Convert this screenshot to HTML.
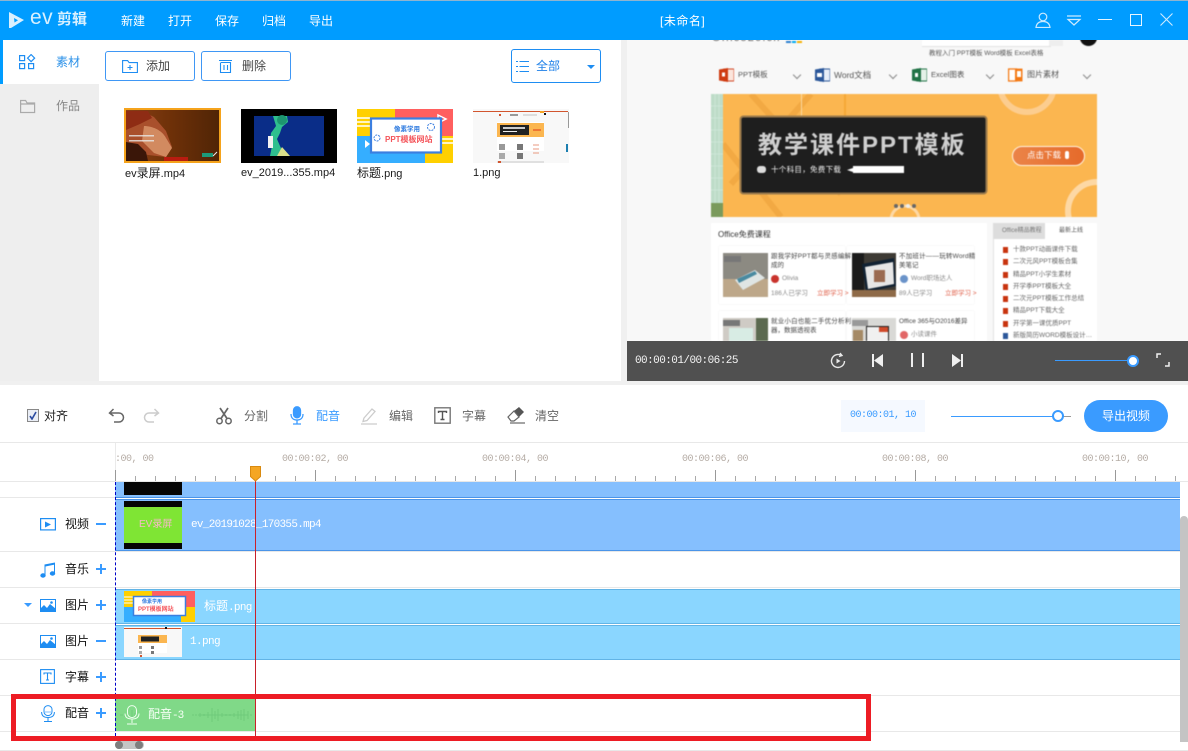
<!DOCTYPE html>
<html lang="zh-CN"><head><meta charset="utf-8"><title>EV剪辑</title>
<style>
html,body{margin:0;padding:0;background:#fff;overflow:hidden}
#app{position:relative;width:1188px;height:751px;overflow:hidden;background:#fff;font-family:"Liberation Sans","Noto Sans CJK SC",sans-serif;font-size:13px;color:#333}
.a{position:absolute}
.t{position:absolute;white-space:nowrap;line-height:18px}
svg{position:absolute;overflow:hidden;display:block}
.mono{font-family:"Liberation Mono","Noto Sans CJK SC",monospace}
.r{font-size:10px;color:#b5aca5;letter-spacing:-.5px;width:80px;text-align:center;top:451px}
.lb{font-size:12px;color:#111;left:65px}
.pm{position:absolute;left:96px;width:10px;height:2px;background:#3a9bff}
.pv{position:absolute;left:100px;width:2px;height:10px;background:#3a9bff}
.line{position:absolute;left:0;height:1px;background:#e8e8e8}
.btn{position:absolute;box-sizing:border-box;border:1px solid #3f97f5;border-radius:3px;background:#fff}
.p{position:absolute;white-space:nowrap;font-size:7.500px;line-height:10px;color:#555}
.dot{position:absolute;width:5px;height:6px;background:#c8340f;left:1003px}
.ch{position:absolute;width:5px;height:5px;border-right:1px solid #888;border-bottom:1px solid #888;transform:rotate(45deg);top:72px}
.th{filter:blur(.35px)}
.fn{font-size:11px;color:#1a1a1a}
.fn span{font-size:12px}
.li{left:1013px;color:#666;font-size:6.500px}
#hd{position:absolute;left:0;top:0;width:1188px;height:40px;z-index:5}
#pv{position:absolute;left:627px;top:40px;width:561px;height:301px;overflow:hidden;background:#f8f8f8}
#pi{position:absolute;left:-627px;top:-40px;width:1188px;height:751px;filter:blur(.4px)}
</style></head><body>
<div id="app">

<!-- header -->
<div id="hd">
<div class="a" style="left:0;top:0;width:1188px;height:1px;background:#8fb4cf"></div>
<div class="a" style="left:0;top:1px;width:1188px;height:39px;background:#009cff"></div>
<svg style="left:8px;top:11px" width="17" height="18" viewBox="0 0 17 18"><path d="M1 1 L16 9 L3 17 L1 17Z" fill="#d8f0ff"/><path d="M6 7 L10 9.200 L6.500 11.500Z" fill="#009cff"/></svg>
<div class="t" style="left:30px;top:6px;font-size:21px;line-height:24px;color:#d8f0ff;letter-spacing:.5px">ev</div>
<div class="t" style="left:57px;top:10px;font-size:15px;line-height:20px;font-weight:700;color:#d8f0ff">剪辑</div>
<div class="t" style="left:121px;top:12px;color:#fff;font-size:12px">新建</div>
<div class="t" style="left:168px;top:12px;color:#fff;font-size:12px">打开</div>
<div class="t" style="left:215px;top:12px;color:#fff;font-size:12px">保存</div>
<div class="t" style="left:262px;top:12px;color:#fff;font-size:12px">归档</div>
<div class="t" style="left:309px;top:12px;color:#fff;font-size:12px">导出</div>
<div class="t" style="left:660px;top:12px;color:#fff;font-size:12px;letter-spacing:.5px">[未命名]</div>
<svg style="left:1034px;top:12px" width="18" height="16" viewBox="0 0 18 16" fill="none" stroke="#cdeaff" stroke-width="1.200"><circle cx="9" cy="5" r="3.800"/><path d="M2 15.500c.5-4 3-6 7-6s6.500 2 7 6z"/></svg>
<svg style="left:1066px;top:15px" width="16" height="11" viewBox="0 0 16 11" fill="none" stroke="#cdeaff" stroke-width="1.200"><path d="M1 1h14M2 4.500h12L8 10z"/></svg>
<div class="a" style="left:1098px;top:19px;width:14px;height:1px;background:#e6f5ff"></div>
<div class="a" style="left:1130px;top:14px;width:10px;height:10px;border:1.500px solid #e6f5ff"></div>
<svg style="left:1160px;top:13px" width="13" height="13" viewBox="0 0 13 13" stroke="#cdeaff" stroke-width="1.100"><path d="M.5.500l12 12M12.500.500l-12 12"/></svg>
</div>

<!-- sidebar -->
<div class="a" style="left:0;top:40px;width:3px;height:44px;background:#009cff"></div>
<div class="a" style="left:0;top:84px;width:99px;height:298px;background:#eeeeee"></div>
<svg style="left:19px;top:54px" width="17" height="16" viewBox="0 0 17 16" fill="none" stroke="#1e8df2" stroke-width="1.200"><rect x=".6" y="1.600" width="5" height="5"/><rect x=".6" y="9.600" width="5" height="5"/><rect x="9.600" y="9.600" width="5" height="5"/><rect x="9.600" y="1.600" width="5" height="5" transform="rotate(45 12.100 4.100)"/></svg>
<div class="t" style="left:56px;top:53px;color:#2a90e8;font-size:12px">素材</div>
<svg style="left:19px;top:99px" width="17" height="15" viewBox="0 0 17 15" fill="none" stroke="#aaa" stroke-width="1.200"><path d="M1.600 13.500V1.500h5l1.500 2.500h7.500v9.500zM1.600 5h14"/></svg>
<div class="t" style="left:56px;top:97px;color:#888;font-size:12px">作品</div>

<!-- buttons -->
<div class="btn" style="left:105px;top:51px;width:90px;height:30px"></div>
<svg style="left:122px;top:60px" width="16" height="13" viewBox="0 0 16 13" fill="none" stroke="#1e8df2" stroke-width="1.100"><path d="M.6 12.500V.6h5l1.500 2h8.300v9.900zM5.500 7.500h5M8 5v5"/></svg>
<div class="t" style="left:146px;top:57px;color:#444;font-size:12px">添加</div>
<div class="btn" style="left:201px;top:51px;width:90px;height:30px"></div>
<svg style="left:219px;top:59px" width="13" height="14" viewBox="0 0 13 14" fill="none" stroke="#1e8df2" stroke-width="1.100"><path d="M0 1.500h13M2 3.500h9.500v10H1.500v-10M5 6v5M8.500 6v5"/></svg>
<div class="t" style="left:242px;top:57px;color:#444;font-size:12px">删除</div>
<div class="btn" style="left:511px;top:49px;width:90px;height:34px;border-color:#1e8df2"></div>
<svg style="left:516px;top:61px" width="13" height="11" viewBox="0 0 13 11" stroke="#1e8df2" stroke-width="1"><path d="M3.500 .5H13M3.500 5.500H13M3.500 10.500H13M0 .5h2M0 5.500h2M0 10.500h2"/></svg>
<div class="t" style="left:536px;top:57px;color:#1e80e8;font-size:12px">全部</div>
<div class="a" style="left:587px;top:65px;border-left:4px solid transparent;border-right:4px solid transparent;border-top:4px solid #1e8df2"></div>

<!-- thumb 1 -->
<svg class="th" style="left:124px;top:108px" width="97" height="55" viewBox="0 0 97 55"><defs><linearGradient id="g1" x1="0" x2="1"><stop offset="0" stop-color="#8a4016"/><stop offset=".5" stop-color="#6d3008"/><stop offset="1" stop-color="#4f2406"/></linearGradient></defs><rect width="97" height="55" fill="url(#g1)"/><path d="M2 3h16l12 6 12 14 6 16-6 10-18-2L2 40z" fill="#a9502c"/><path d="M20 18c8 0 18 4 22 12l6 10-6 9-12-4-12-12z" fill="#d28a60"/><path d="M2 3h22l4 7-12 6-14 6z" fill="#8e2c14"/><path d="M2 34l12 2 8 8 2 9H2z" fill="#3a1608"/><path d="M40 49h24v4H40z" fill="#b81c10"/><rect x="78" y="45" width="11" height="4" fill="#1c9a78"/><path d="M89 48l4-4" stroke="#eee"/><rect x="5" y="27" width="25" height="1.500" fill="#e8e8e8" opacity=".8"/><rect x="5" y="32" width="25" height="1.500" fill="#e8e8e8" opacity=".8"/><rect x="1" y="1" width="95" height="53" fill="none" stroke="#f5a31c" stroke-width="2"/></svg>
<div class="t fn" style="left:125px;top:164px">ev<span>录屏</span>.mp4</div>

<!-- thumb 2 -->
<svg class="th" style="left:241px;top:109px" width="96" height="54" viewBox="0 0 96 54"><rect width="96" height="54" fill="#000"/><rect x="13" y="7" width="70" height="40" fill="#0a2d88"/><path d="M32 7h14l1 6-6 5-2 6-3 6 3 7 5 10H29l2-10-2-4 1-9 5-7z" fill="#2fbf8e"/><circle cx="41" cy="11" r="5" fill="#1d9670"/><rect x="27" y="27" width="5" height="12" fill="#f2f2f2"/><path d="M36 47l5-9 8 9z" fill="#dbe08a"/></svg>
<div class="t fn" style="left:241px;top:164px">ev_2019...355.mp4</div>

<!-- thumb 3 -->
<svg class="th" style="left:357px;top:109px" width="96" height="54" viewBox="0 0 96 54"><rect width="38" height="27" fill="#ffd000"/><rect x="38" width="58" height="27" fill="#ff5f5f"/><rect y="27" width="68" height="27" fill="#35aeff"/><rect x="68" y="27" width="28" height="27" fill="#ffd000"/><path d="M0 9h13M0 13h13M0 17h13" stroke="#fff" stroke-width="1.500"/><path d="M84 30h12M84 34h12" stroke="#fff" stroke-width="1.500"/><path d="M81 6l8 4-8 4z" fill="none" stroke="#fff" stroke-width="1.500"/><path d="M8 31l5 4-5 4z" fill="#fff"/><rect x="14" y="9.500" width="70" height="34" fill="#fff" stroke="#3b7fe0" stroke-width="2.200"/><text x="37" y="22" font-size="6.500" font-weight="700" fill="#2f7be0" font-family="Noto Sans CJK SC">像素学用</text><text x="28" y="33" font-size="8" font-weight="700" fill="#f4545a" font-family="Liberation Sans,Noto Sans CJK SC">PPT模板网站</text><circle cx="74" cy="18" r="3.500" fill="none" stroke="#3b7fe0" stroke-dasharray="2 1"/><circle cx="20" cy="29" r="3" fill="none" stroke="#3b7fe0" stroke-dasharray="2 1"/></svg>
<div class="t fn" style="left:357px;top:164px"><span>标题</span>.png</div>

<!-- thumb 4 -->
<svg class="th" style="left:473px;top:109px" width="96" height="54" viewBox="0 0 96 54"><rect width="96" height="54" fill="#f8f8f8"/><rect y="2" width="95" height="1" fill="#d2552e"/><rect x="67" y="2" width="4" height="2" fill="#f5a623"/><rect x="95" y="3" width="1" height="16" fill="#999"/><rect x="24" y="13" width="47" height="29" fill="#fff"/><rect x="24" y="14" width="47" height="14" fill="#fbb650"/><rect x="27" y="16" width="29" height="10" fill="#222"/><rect x="30" y="18" width="22" height="2" fill="#ccc"/><rect x="30" y="22" width="14" height="1" fill="#eee"/><rect x="60" y="20" width="8" height="2" fill="#ee7733"/><rect x="26" y="35" width="6" height="6" fill="#999"/><rect x="44" y="35" width="6" height="6" fill="#777"/><rect x="26" y="44" width="6" height="6" fill="#aaa"/><rect x="44" y="44" width="6" height="6" fill="#777"/><path d="M60 36h6M60 40h6M60 44h6" stroke="#e89a80"/><rect x="24" y="52" width="47" height="2" fill="#e0e0e0"/><rect x="25" y="52" width="3" height="2" fill="#d2552e"/><rect x="26" y="5" width="2" height="2" fill="#d2552e"/><rect x="37" y="5" width="8" height="2" fill="#999"/><rect x="50" y="5" width="14" height="2" fill="#ddd"/><rect x="71" y="4" width="2" height="2" fill="#111"/><rect x="93" y="35" width="2" height="8" fill="#1c7fb0"/></svg>
<div class="t fn" style="left:473px;top:164px">1.png</div>

<!-- preview -->
<div class="a" style="left:621px;top:40px;width:6px;height:342px;background:#f0f0f0"></div>
<div class="a" style="left:0;top:381px;width:1188px;height:4px;background:#f0f0f0"></div>
<div id="pv"><div id="pi">

<div class="t" style="left:712px;top:32px;font-size:11px;line-height:12px;color:#666;letter-spacing:1.200px">Office26.cn</div>
<div class="a" style="left:786px;top:41px;width:5px;height:2px;background:#2a7fd0"></div>
<div class="a" style="left:792px;top:41px;width:4px;height:2px;background:#00a9f0"></div>
<div class="a" style="left:797px;top:41px;width:5px;height:2px;background:#f5b000"></div>
<div class="a" style="left:922px;top:40px;width:129px;height:6px;background:#fff;border-bottom:1px solid #e2e2e2"></div>
<div class="a" style="left:1049px;top:40px;width:14px;height:6px;background:#eee"></div>
<div class="a" style="left:1080px;top:30px;width:17px;height:16px;border-radius:50%;background:#111"></div>
<div class="p" style="left:929px;top:49px;font-size:6.500px;color:#555">教程入门 PPT模板 Word模板 Excel表格</div>

<!-- preview nav -->
<svg style="left:719px;top:68px" width="15" height="14" viewBox="0 0 15 14"><rect x="5" y="1" width="10" height="12" fill="#fbe5dc" stroke="#d24726"/><path d="M0 1.500L9 0v14l-9-1.500z" fill="#cf3c12"/><rect x="3" y="4.500" width="3" height="4" fill="#fff"/></svg>
<div class="p" style="left:738px;top:70px;font-size:7.500px;color:#555">PPT模板</div>
<div class="ch" style="left:794px"></div>
<svg style="left:815px;top:68px" width="15" height="14" viewBox="0 0 15 14"><rect x="5" y="1" width="10" height="12" fill="#e6edf8" stroke="#2b579a"/><path d="M0 1.500L9 0v14l-9-1.500z" fill="#2b579a"/><rect x="2" y="5" width="5" height="4" fill="#fff"/></svg>
<div class="p" style="left:834px;top:70px;font-size:8.500px;color:#555">Word文档</div>
<div class="ch" style="left:890px"></div>
<svg style="left:912px;top:68px" width="15" height="14" viewBox="0 0 15 14"><rect x="5" y="1" width="10" height="12" fill="#e4f1e8" stroke="#217346"/><path d="M0 1.500L9 0v14l-9-1.500z" fill="#217346"/><rect x="3" y="5" width="3" height="4" fill="#fff"/></svg>
<div class="p" style="left:931px;top:70px;font-size:7.500px;color:#555">Excel图表</div>
<div class="ch" style="left:987px"></div>
<svg style="left:1008px;top:68px" width="15" height="14" viewBox="0 0 15 14"><rect x=".6" y="1" width="8" height="12" fill="#fff" stroke="#f47a16" stroke-width="1.300"/><rect x="7" y=".6" width="7.500" height="12.800" fill="#f47a16"/><rect x="9" y="3" width="4" height="6" fill="#fff"/></svg>
<div class="p" style="left:1027px;top:70px;font-size:8px;color:#555">图片素材</div>
<div class="ch" style="left:1084px"></div>

<!-- banner -->
<svg style="left:711px;top:94px" width="386" height="123" viewBox="0 0 386 123"><rect width="386" height="123" fill="#fbb650"/><path d="M40 0L130 100M100 0L20 90M12 50L70 123" stroke="#f2a943" stroke-width="6" fill="none"/><rect x="90" width="1" height="22" fill="#fbd9a0"/><rect x="0" width="12" height="123" fill="#bddcc8"/><path d="M0 12h12M0 24h12M0 36h12M0 48h12M0 60h12M0 72h12M0 84h12M0 96h12M4 0v109M8 0v109" stroke="#d2e8da" stroke-width=".7"/><rect y="109" width="12" height="14" fill="#7a9a5c"/><rect x="133" width="2" height="22" fill="#f5a836"/><circle cx="316" cy="-9" r="27" fill="none" stroke="#fccd8f" stroke-width="6"/><circle cx="386" cy="117" r="29" fill="none" stroke="#fdd8a4" stroke-width="6"/><circle cx="194" cy="126" r="14" fill="none" stroke="#fdd8a4" stroke-width="3"/><rect x="29.500" y="22.500" width="246" height="77" rx="3" fill="#1e1e1e" stroke="#9a7a4c" stroke-width="2"/><rect x="183" y="110" width="4" height="4" rx="2" fill="#666"/><rect x="189" y="110" width="4" height="4" rx="2" fill="#666"/><rect x="195" y="110" width="4" height="4" rx="2" fill="#eee"/><rect x="201" y="110" width="4" height="4" rx="2" fill="#666"/></svg>
<div class="t" style="left:758px;top:130px;font-size:24px;line-height:32px;font-weight:700;color:#cfcfcf;letter-spacing:2px">教学课件PPT模板</div>
<div class="t" style="left:771px;top:164px;font-size:7.500px;line-height:12px;color:#f2f2f2;letter-spacing:.3px">十个科目，免费下载</div>
<div class="a" style="left:757px;top:166px;width:9px;height:7px;border-radius:3px;background:#ddd"></div>
<div class="a" style="left:853px;top:166px;width:51px;height:7px;background:#fff"></div>
<div class="a" style="left:847px;top:168px;border-top:2px solid transparent;border-bottom:2px solid transparent;border-right:6px solid #fff"></div>
<div class="a" style="left:1012px;top:146px;width:71px;height:18px;border:1px solid #fff2e0;border-radius:10px;background:linear-gradient(90deg,#eb8448,#e66a2a)"></div>
<div class="t" style="left:1027px;top:149px;font-size:8.500px;line-height:13px;color:#fff">点击下载</div>
<div class="a" style="left:1065px;top:151px;width:4px;height:8px;border-radius:2px;background:#fff"></div>

<!-- course panel -->
<div class="a" style="left:711px;top:223px;width:276px;height:118px;background:#fff"></div>
<div class="p" style="left:718px;top:230px;font-size:8px;color:#333">Office免费课程</div>
<div class="a" style="left:719px;top:246px;width:126px;height:58px;background:#fff;box-shadow:0 0 2px #eee"></div>
<div class="a" style="left:847px;top:246px;width:127px;height:58px;background:#fff;box-shadow:0 0 2px #eee"></div>
<svg style="left:723px;top:253px" width="45" height="44" viewBox="0 0 45 44"><rect width="45" height="44" fill="#8c8a82"/><rect y="26" width="45" height="18" fill="#bda789"/><path d="M12 27l20-10 10 8-22 12z" fill="#dfe5e4"/><path d="M14 26l18-8 2 3-18 9z" fill="#4a8aa0"/><rect x="1" y="3" width="17" height="6" fill="#777"/></svg>
<svg style="left:852px;top:253px" width="44" height="44" viewBox="0 0 44 44"><rect width="44" height="44" fill="#3d3a34"/><rect y="0" width="12" height="44" fill="#1b1b1b"/><path d="M10 11l32-6 2 28-30 6z" fill="#123"/><path d="M13 14l28-5 1 22-26 5z" fill="#e6e6e6"/><rect x="22" y="17" width="11" height="12" fill="#9a6a50"/><rect y="37" width="44" height="7" fill="#8e6a48"/></svg>
<div class="p" style="left:771px;top:252px;color:#444;font-size:6.500px;letter-spacing:.2px">跟我学好PPT都与灵感编解</div>
<div class="p" style="left:771px;top:261px;color:#444;font-size:6.500px">成的</div>
<div class="a" style="left:771px;top:275px;width:8px;height:8px;border-radius:50%;background:#c9332c"></div>
<div class="p" style="left:782px;top:274px;color:#888;font-size:6.500px">Olivia</div>
<div class="p" style="left:771px;top:289px;color:#888;font-size:6.500px">186人已学习</div>
<div class="p" style="left:817px;top:289px;color:#e0604a;font-size:6.500px">立即学习 &gt;</div>
<div class="p" style="left:899px;top:252px;color:#444;font-size:6.500px;letter-spacing:.2px">不加班计——玩转Word精</div>
<div class="p" style="left:899px;top:261px;color:#444;font-size:6.500px">美笔记</div>
<div class="a" style="left:900px;top:275px;width:8px;height:8px;border-radius:50%;background:#6a93c9"></div>
<div class="p" style="left:911px;top:274px;color:#888;font-size:6.500px">Word职场达人</div>
<div class="p" style="left:899px;top:289px;color:#888;font-size:6.500px">89人已学习</div>
<div class="p" style="left:945px;top:289px;color:#e0604a;font-size:6.500px">立即学习 &gt;</div>
<div class="a" style="left:719px;top:311px;width:126px;height:30px;background:#fff;box-shadow:0 0 2px #eee"></div>
<div class="a" style="left:847px;top:311px;width:127px;height:30px;background:#fff;box-shadow:0 0 2px #eee"></div>
<svg style="left:723px;top:318px" width="45" height="23" viewBox="0 0 45 23"><rect width="45" height="23" fill="#cfcbc5"/><rect x="6" y="10" width="24" height="13" fill="#d8ece4"/><rect x="33" width="12" height="23" fill="#5c6a50"/><rect x="0" y="2" width="17" height="6" fill="#777"/></svg>
<svg style="left:852px;top:318px" width="44" height="23" viewBox="0 0 44 23"><rect width="44" height="23" fill="#d9d9d6"/><rect x="14" y="8" width="23" height="15" fill="#222"/><rect x="15" y="9" width="21" height="14" fill="#f0f0f0"/><rect x="27" y="9" width="9" height="5" fill="#d04a2a"/><rect x="0" y="2" width="16" height="6" fill="#999"/><rect x="1" y="12" width="10" height="11" fill="#a58a66"/></svg>
<div class="p" style="left:771px;top:317px;color:#444;font-size:6.500px;letter-spacing:.2px">就业小白也能二手优分析利</div>
<div class="p" style="left:771px;top:326px;color:#444;font-size:6.500px">器，数据透视表</div>
<div class="p" style="left:899px;top:317px;color:#444;font-size:6.500px">Office 365与O2016差异</div>
<div class="a" style="left:900px;top:331px;width:8px;height:8px;border-radius:50%;background:#e26666"></div>
<div class="p" style="left:911px;top:330px;color:#888;font-size:6.500px">小读课件</div>

<!-- right list -->
<div class="a" style="left:993px;top:223px;width:104px;height:118px;background:#fff"></div>
<div class="a" style="left:993px;top:223px;width:52px;height:16px;background:#dddddd"></div>
<div class="a" style="left:993px;top:239px;width:1px;height:102px;background:#e2e2e2"></div>
<div class="p" style="left:1002px;top:226px;color:#777;font-size:6px">Office精品教程</div>
<div class="p" style="left:1059px;top:226px;color:#555;font-size:6px">最新上线</div>
<div class="dot" style="top:247px"></div><div class="p li" style="top:245px">十款PPT动画课件下载</div>
<div class="dot" style="top:259px"></div><div class="p li" style="top:257px">二次元风PPT模板合集</div>
<div class="dot" style="top:272px"></div><div class="p li" style="top:270px">精品PPT小学生素材</div>
<div class="dot" style="top:284px"></div><div class="p li" style="top:282px">开学季PPT模板大全</div>
<div class="dot" style="top:296px"></div><div class="p li" style="top:294px">二次元PPT模板工作总结</div>
<div class="dot" style="top:308px"></div><div class="p li" style="top:306px">精品PPT下载大全</div>
<div class="dot" style="top:321px"></div><div class="p li" style="top:319px">开学第一课优质PPT</div>
<div class="dot" style="top:333px;background:#2b579a"></div><div class="p li" style="top:331px">新版简历WORD模板设计…</div>
</div></div>

<!-- player controls -->
<div class="a" style="left:627px;top:341px;width:561px;height:40px;background:#505050"></div>
<div class="t mono" style="left:635px;top:352px;font-size:11px;color:#f4f4f4;letter-spacing:-.55px">00:00:01/00:06:25</div>
<svg style="left:829px;top:352px" width="18" height="18" viewBox="0 0 18 18" fill="none" stroke="#e8e8e8" stroke-width="1.400"><path d="M15.500 9a6.500 6.500 0 1 1-3-5.500M11 1l2 2.500-3 1"/><path d="M7.500 6.500l4 2.500-4 2.500z" fill="#e8e8e8" stroke="none"/></svg>
<svg style="left:871px;top:353px" width="13" height="15" viewBox="0 0 13 15" fill="#f0f0f0"><rect x="1" y="1" width="2" height="13"/><path d="M12 1v13L3 7.500z"/></svg>
<div class="a" style="left:911px;top:353px;width:2px;height:14px;background:#eee"></div>
<div class="a" style="left:922px;top:353px;width:2px;height:14px;background:#eee"></div>
<svg style="left:951px;top:353px" width="13" height="15" viewBox="0 0 13 15" fill="#f0f0f0"><rect x="10" y="1" width="2" height="13"/><path d="M1 1v13l9-6.500z"/></svg>
<div class="a" style="left:1055px;top:360px;width:78px;height:1px;background:#3a9bff"></div>
<div class="a" style="left:1127px;top:355px;width:8px;height:8px;border:2px solid #3a9bff;border-radius:50%;background:#fff"></div>
<svg style="left:1156px;top:353px" width="14" height="14" viewBox="0 0 14 14" fill="none" stroke="#f0f0f0" stroke-width="1.500"><path d="M1 5V1h4M13 9v4H9"/></svg>

<!-- toolbar -->
<div class="a" style="left:27px;top:409px;width:10px;height:11px;border:1px solid #888;background:#e9edf5"></div>
<svg style="left:29px;top:411px" width="9" height="9" viewBox="0 0 9 9" fill="none" stroke="#2a4aa0" stroke-width="1.600"><path d="M1 5l2 3 4-7"/></svg>
<div class="t" style="left:44px;top:407px;font-size:12px;color:#222">对齐</div>
<svg style="left:108px;top:408px" width="17" height="16" viewBox="0 0 17 16" fill="none" stroke="#666" stroke-width="1.500"><path d="M2 5h9a4.500 4.500 0 0 1 0 9H6M5.500 1L1.500 5l4 3"/></svg>
<svg style="left:143px;top:408px" width="17" height="16" viewBox="0 0 17 16" fill="none" stroke="#ccc" stroke-width="1.500"><path d="M15 5H6a4.500 4.500 0 0 0 0 9h5M11.500 1l4 4-4 3"/></svg>
<svg style="left:216px;top:407px" width="16" height="18" viewBox="0 0 16 18" fill="none" stroke="#666" stroke-width="1.500"><circle cx="3.500" cy="14" r="2.700"/><circle cx="12.500" cy="14" r="2.700"/><path d="M5 11.500L12 1M11 11.500L4 1" stroke-width="1.700"/></svg>
<div class="t" style="left:244px;top:407px;font-size:12px;color:#666">分割</div>
<svg style="left:290px;top:406px" width="14" height="19" viewBox="0 0 14 19" fill="none" stroke="#3a9bff" stroke-width="1.300"><rect x="3.500" y=".8" width="7" height="11" rx="3.500" fill="#3a9bff"/><path d="M1 8c0 4 2.500 6 6 6s6-2 6-6M7 14v4M3 18h8"/></svg>
<div class="t" style="left:316px;top:407px;font-size:12px;color:#3a9bff">配音</div>
<svg style="left:361px;top:407px" width="16" height="18" viewBox="0 0 16 18" fill="none" stroke="#ccc" stroke-width="1.300"><path d="M3 11L11 2l3 2.500L6 13.500l-4 1zM0 17h16"/></svg>
<div class="t" style="left:389px;top:407px;font-size:12px;color:#666">编辑</div>
<svg style="left:434px;top:407px" width="17" height="17" viewBox="0 0 17 17" fill="none" stroke="#555" stroke-width="1.400"><rect x=".8" y=".8" width="15.400" height="15.400" stroke="#777"/><path d="M4.500 6V4.500h8V6M8.500 4.500v8M6.500 12.500h4"/></svg>
<div class="t" style="left:462px;top:407px;font-size:12px;color:#666">字幕</div>
<svg style="left:507px;top:407px" width="18" height="17" viewBox="0 0 18 17"><path d="M7 4l5-4 5 5-5 5z" fill="#555"/><path d="M7 4L1 10l3 4h3l5-4z" fill="none" stroke="#666" stroke-width="1.200"/><path d="M3 16h15" stroke="#666" stroke-width="1.200"/></svg>
<div class="t" style="left:535px;top:407px;font-size:12px;color:#666">清空</div>
<div class="a" style="left:841px;top:400px;width:84px;height:32px;background:#f5f9ff"></div>
<div class="t mono" style="left:850px;top:407px;font-size:10px;color:#3a9bff;letter-spacing:-.5px">00:00:01, 10</div>
<div class="a" style="left:951px;top:416px;width:107px;height:1px;background:#3a9bff"></div>
<div class="a" style="left:1058px;top:416px;width:13px;height:1px;background:#999"></div>
<div class="a" style="left:1052px;top:410px;width:8px;height:8px;border:2px solid #3a9bff;border-radius:50%;background:#fff"></div>
<div class="a" style="left:1084px;top:400px;width:84px;height:32px;border-radius:16px;background:#3a9bff"></div>
<div class="t" style="left:1102px;top:407px;font-size:12px;color:#fff">导出视频</div>

<!-- ruler -->
<div class="line" style="top:442px;width:1188px"></div>
<div class="a" style="left:115px;top:443px;width:1px;height:38px;background:#eaeaea"></div>
<div class="a" style="left:115px;top:476px;width:1065px;height:5px;background:repeating-linear-gradient(to right,#aaa 0 1px,transparent 1px 20px)"></div>
<div class="a" style="left:115px;top:470px;width:1065px;height:11px;background:repeating-linear-gradient(to right,#999 0 1px,transparent 1px 200px)"></div>
<div class="t mono r" style="left:115px;width:34px;text-align:left">:00, 00</div>
<div class="t mono r" style="left:275px">00:00:02, 00</div>
<div class="t mono r" style="left:475px">00:00:04, 00</div>
<div class="t mono r" style="left:675px">00:00:06, 00</div>
<div class="t mono r" style="left:875px">00:00:08, 00</div>
<div class="t mono r" style="left:1075px">00:00:10, 00</div>
<div class="line" style="top:481px;width:1188px"></div>

<!-- row lines -->
<div class="line" style="top:497px;width:115px"></div>
<div class="line" style="top:551px;width:1188px"></div>
<div class="line" style="top:587px;width:1188px"></div>
<div class="line" style="top:623px;width:115px"></div>
<div class="line" style="top:659px;width:115px"></div>
<div class="line" style="top:695px;width:1188px"></div>
<div class="line" style="top:731px;width:1188px"></div>
<div class="line" style="top:750px;width:1188px"></div>

<!-- clips -->
<div class="a" style="left:115px;top:482px;width:1065px;height:15px;background:#85bffe"></div>
<div class="a" style="left:115px;top:497px;width:1065px;height:1px;background:#4b94e8"></div>
<div class="a" style="left:124px;top:482px;width:58px;height:13px;background:#050505"></div>
<div class="a" style="left:115px;top:499px;width:1065px;height:52px;background:#85bffe;border-top:1px solid #4b94e8;border-bottom:1px solid #4b94e8;box-sizing:border-box"></div>
<div class="a" style="left:124px;top:501px;width:58px;height:48px;background:#050505"></div>
<div class="a" style="left:124px;top:507px;width:58px;height:36px;background:#7fe534"></div>
<div class="t" style="left:139px;top:516px;font-size:10px;color:#f7b8c8">EV录屏</div>
<div class="t mono" style="left:191px;top:516px;font-size:11px;color:#fff;letter-spacing:-.7px">ev_20191028_170355.mp4</div>

<div class="a" style="left:115px;top:589px;width:1065px;height:35px;background:#8ad6ff;border-top:1px solid #62b4e6;border-bottom:1px solid #62b4e6;box-sizing:border-box"></div>
<svg style="left:124px;top:591px" width="71" height="31" viewBox="0 0 71 31"><rect width="28" height="16" fill="#ffd000"/><rect x="28" width="43" height="16" fill="#ff5f5f"/><rect y="16" width="57" height="15" fill="#35aeff"/><rect x="57" y="16" width="14" height="15" fill="#ffd000"/><path d="M0 6h9M0 9h9M0 12h9" stroke="#fff"/><rect x="9.500" y="5.500" width="52" height="19" fill="#fff" stroke="#3b7fe0" stroke-width="1.500"/><text x="18" y="12" font-size="5" font-weight="700" fill="#2f7be0" font-family="Noto Sans CJK SC">像素学用</text><text x="14" y="20" font-size="6" font-weight="700" fill="#f4545a" font-family="Liberation Sans,Noto Sans CJK SC">PPT模板网站</text></svg>
<div class="t" style="left:204px;top:597px;font-size:12px;color:#fff">标题<span class="mono" style="font-size:11px;letter-spacing:-.7px">.png</span></div>

<div class="a" style="left:115px;top:625px;width:1065px;height:35px;background:#8ad6ff;border-top:1px solid #62b4e6;border-bottom:1px solid #62b4e6;box-sizing:border-box"></div>
<svg style="left:124px;top:627px" width="58" height="30" viewBox="0 0 58 30"><rect width="58" height="30" fill="#f8f8f8"/><rect y="1" width="57" height="1" fill="#d2552e"/><rect x="41" y="0" width="2" height="2" fill="#111"/><rect x="14" y="8" width="29" height="18" fill="#fff"/><rect x="14" y="8" width="29" height="8" fill="#fbb650"/><rect x="17" y="9.500" width="18" height="5" fill="#222"/><rect x="15" y="19" width="3" height="3" fill="#999"/><rect x="27" y="19" width="3" height="3" fill="#777"/><rect x="15" y="24" width="3" height="3" fill="#aaa"/><rect x="27" y="24" width="3" height="3" fill="#777"/><rect x="16" y="28" width="2" height="2" fill="#d2552e"/></svg>
<div class="t mono" style="left:190px;top:633px;font-size:11px;color:#fff;letter-spacing:-.6px">1.png</div>

<div class="a" style="left:115px;top:699px;width:140px;height:32px;background:#80d988"></div>
<svg style="left:118px;top:705px" width="135" height="20" viewBox="0 0 135 20" stroke="#6fcb7a" stroke-width="1"><path d="M2 10h3M7 8v4M10 9v2M14 5v10M17 8v4M21 9v2M75 9v2M78 9v2M82 8v4M86 9v2M90 7v6M94 3v14M97 6v8M100 4v12M104 8v4M108 9v2M112 9v2M116 8v4M120 6v8M123 5v10M126 4v12M130 6v8M133 9v2M80 10h50"/></svg>
<svg style="left:124px;top:705px" width="16" height="20" viewBox="0 0 16 20" fill="none" stroke="#f0fff0" stroke-width="1"><rect x="3.500" y=".6" width="9" height="12" rx="4.500"/><path d="M1 8.500c0 4 3 5.500 7 5.500s7-1.500 7-5.500M8 14v4M3 19h10"/></svg>
<div class="t" style="left:148px;top:705px;font-size:12px;color:#f4fff4">配音<span class="mono" style="font-size:11px;letter-spacing:-1px">-3</span></div>

<!-- row labels -->
<svg style="left:40px;top:518px" width="16" height="13" viewBox="0 0 16 13"><rect x=".6" y=".6" width="14.800" height="11.300" fill="none" stroke="#1e8df2" stroke-width="1.200"/><path d="M5 3.500l6 3-6 3z" fill="#1e8df2"/></svg>
<div class="t lb" style="top:515px">视频</div>
<div class="pm" style="top:523px"></div>
<svg style="left:40px;top:562px" width="16" height="16" viewBox="0 0 16 16" fill="#1e8df2"><path d="M4.500 2.500L15 .5v2L5.500 4.500V13h-1zM14 2h1v9.500h-1z"/><ellipse cx="3" cy="13.500" rx="2.700" ry="2.200"/><ellipse cx="12.500" cy="11.500" rx="2.700" ry="2.200"/></svg>
<div class="t lb" style="top:560px">音乐</div>
<div class="pm" style="top:568px"></div><div class="pv" style="top:564px"></div>

<div class="a" style="left:24px;top:603px;border-left:4px solid transparent;border-right:4px solid transparent;border-top:4px solid #3a9bff"></div>
<svg style="left:40px;top:599px" width="16" height="13" viewBox="0 0 16 13"><rect x=".5" y=".5" width="15" height="12" fill="#fff" stroke="#1e8df2"/><path d="M0 13V10l4-4 3 3 3-4 6 5v3z" fill="#1e8df2"/><circle cx="11.500" cy="3.500" r="1.300" fill="#1e8df2"/></svg>
<div class="t lb" style="top:596px">图片</div>
<div class="pm" style="top:604px"></div><div class="pv" style="top:600px"></div>
<svg style="left:40px;top:635px" width="16" height="13" viewBox="0 0 16 13"><rect x=".5" y=".5" width="15" height="12" fill="#fff" stroke="#1e8df2"/><path d="M0 13V10l4-4 3 3 3-4 6 5v3z" fill="#1e8df2"/><circle cx="11.500" cy="3.500" r="1.300" fill="#1e8df2"/></svg>
<div class="t lb" style="top:632px">图片</div>
<div class="pm" style="top:640px"></div>
<svg style="left:40px;top:669px" width="15" height="15" viewBox="0 0 15 15" fill="none" stroke="#1e8df2" stroke-width="1.100"><rect x=".6" y=".6" width="13.800" height="13.800"/><path d="M4 5.500V4h7v1.500M7.500 4v7M6 11h3"/></svg>
<div class="t lb" style="top:668px">字幕</div>
<div class="pm" style="top:676px"></div><div class="pv" style="top:672px"></div>
<svg style="left:41px;top:705px" width="14" height="17" viewBox="0 0 14 17" fill="none" stroke="#1e8df2" stroke-width="1"><rect x="3" y=".6" width="8" height="10" rx="4"/><path d="M3 7h8" stroke="#7fc0ff"/><path d="M.6 7c0 4 2.500 5.500 6.400 5.500s6.400-1.500 6.400-5.500M7 12.500V16M3 16.500h8"/></svg>
<div class="t lb" style="top:704px">配音</div>
<div class="pm" style="top:712px"></div><div class="pv" style="top:708px"></div>

<!-- scrollbars -->
<div class="a" style="left:1180px;top:516px;width:8px;height:226px;background:#c4c4c4;border-radius:4px 4px 0 0"></div>
<div class="a" style="left:115px;top:741px;width:29px;height:8px;background:#c4c4c4;border-radius:4px"></div>
<div class="a" style="left:115px;top:741px;width:8px;height:8px;background:#7e7e7e;border-radius:50%"></div>
<div class="a" style="left:135px;top:741px;width:8px;height:8px;background:#7e7e7e;border-radius:50%"></div>

<!-- playhead, dashed -->
<div class="a" style="left:115px;top:482px;width:0;height:259px;border-left:1px dashed #0000c8"></div>
<div class="a" style="left:255px;top:481px;width:1px;height:256px;background:#c8202a"></div>
<svg style="left:250px;top:466px" width="11" height="16" viewBox="0 0 11 16"><path d="M.5.500h10v10l-5 4.500-5-4.500z" fill="#f5a623" stroke="#d98a10"/></svg>

<!-- red highlight -->
<div class="a" style="left:11px;top:694px;width:860px;height:47px;box-sizing:border-box;border:5px solid #ed1c24"></div>

</div>
</body></html>
